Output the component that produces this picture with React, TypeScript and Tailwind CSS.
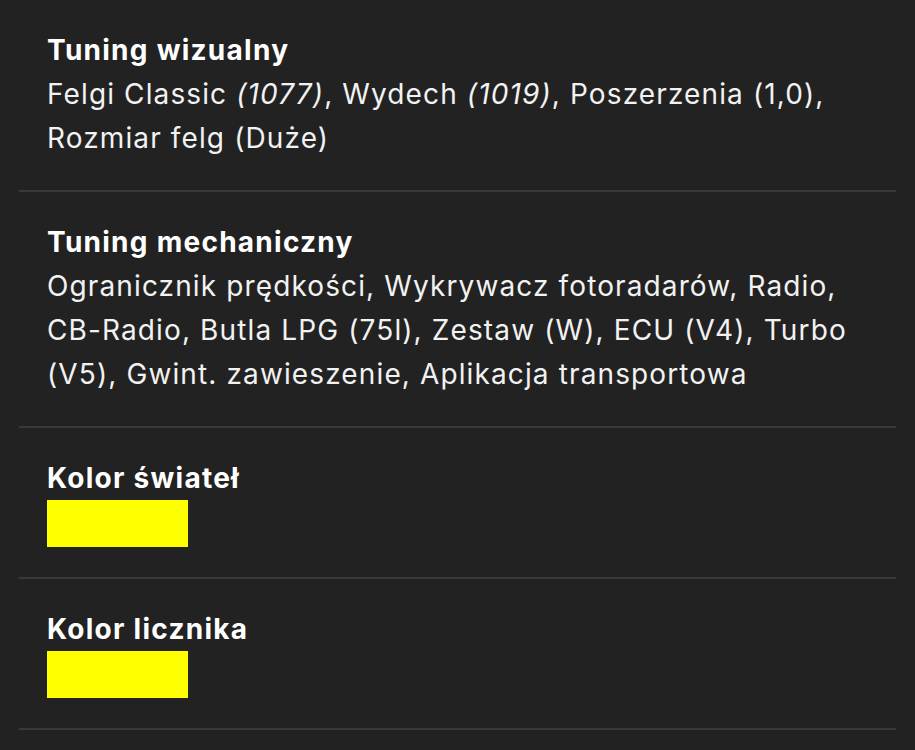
import type { ReactNode } from 'react'

type Entry = {
  title: string
  body?: ReactNode
  swatch?: string
}

const entries: Entry[] = [
  {
    title: 'Tuning wizualny',
    body: (
      <>
        Felgi Classic <i>(1077)</i>, Wydech <i>(1019)</i>, Poszerzenia (1,0), Rozmiar felg (Duże)
      </>
    ),
  },
  {
    title: 'Tuning mechaniczny',
    body: (
      <>
        Ogranicznik prędkości, Wykrywacz fotoradarów, Radio,{' '}
        <span className="whitespace-nowrap">CB-Radio,</span> Butla LPG (75l), Zestaw (W), ECU (V4), Turbo
        (V5), Gwint. zawieszenie, Aplikacja transportowa
      </>
    ),
  },
  { title: 'Kolor świateł', swatch: '#ffff00' },
  { title: 'Kolor licznika', swatch: '#ffff00' },
]

function Row({ title, body, swatch }: Entry) {
  return (
    <div className="border-b-2 border-[#393939] pl-[28px] pr-[20px] pt-[28px] pb-[30px]">
      <div className="font-bold tracking-[0.045em] text-white">{title}</div>
      {body && <div className="tracking-[0.04em] text-[#f2f2f2]">{body}</div>}
      {swatch && <div className="h-[47px] w-[141px]" style={{ backgroundColor: swatch }} />}
    </div>
  )
}

export default function App() {
  return (
    <div
      className="min-h-screen bg-[#222222] px-[19px] text-[28px] leading-[44px]"
      style={{ fontFamily: 'Inter, "Noto Sans", sans-serif' }}
    >
      {entries.map((e) => (
        <Row key={e.title} {...e} />
      ))}
    </div>
  )
}
